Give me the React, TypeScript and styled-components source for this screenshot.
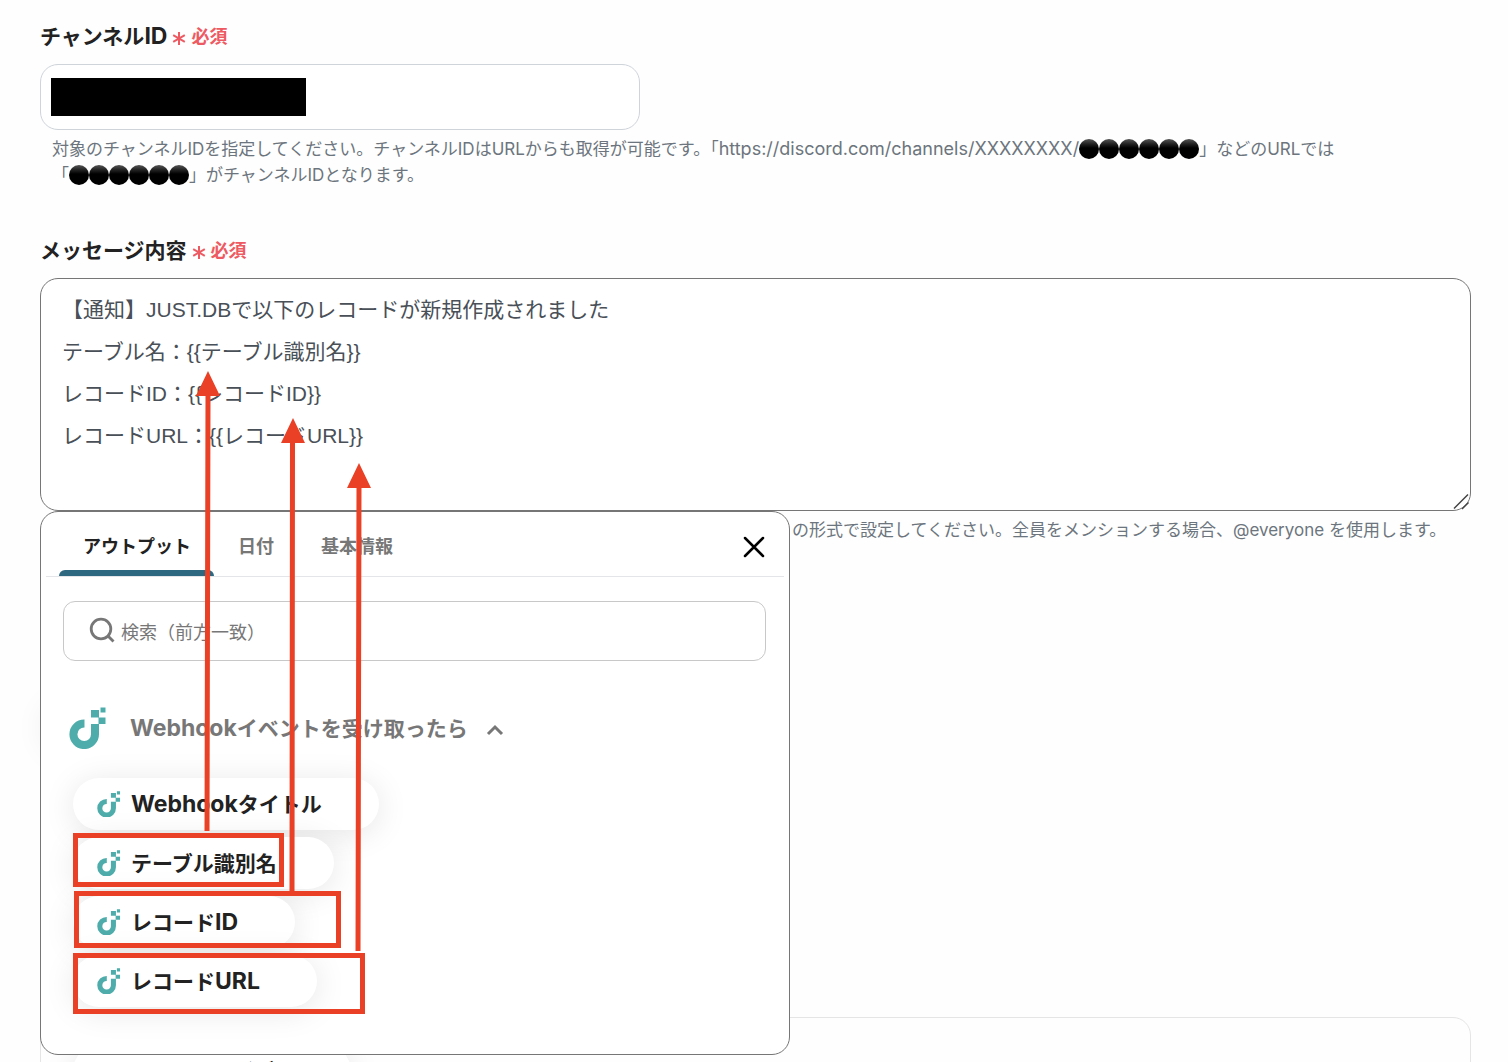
import React, { useState } from "react";
import styled, { createGlobalStyle } from "styled-components";

const GlobalStyle = createGlobalStyle`
  *, *::before, *::after { box-sizing: border-box; }
  body {
    margin: 0;
    background: #fefefe;
    color: #222;
    font-family: Inter, "Noto Sans CJK JP", sans-serif;
    overflow: hidden;
  }
  button, input, textarea { font-family: inherit; }
`;

const Page = styled.main`
  position: relative;
  height: 100vh;
  padding: 24px 37px 0 40px;
  overflow: hidden;
`;

const Field = styled.section<{ $gap?: number }>`
  position: relative;
  margin-bottom: ${(p) => p.$gap ?? 0}px;
`;

const Label = styled.label`
  display: flex;
  align-items: center;
  gap: 5px;
  height: 26px;
  margin-bottom: 14px;
  font-size: 21px;
  font-weight: 700;
  line-height: 26px;
`;

const Required = styled.span`
  display: flex;
  align-items: center;
  gap: 5px;
  color: #ee5a62;
  font-size: 18px;
`;

const InputBox = styled.div`
  position: relative;
  max-width: 600px;
`;

const TextInput = styled.input`
  display: block;
  width: 100%;
  height: 66px;
  padding: 0 22px;
  border: 1px solid #ced4da;
  border-radius: 18px;
  background: #fff;
  font-size: 21px;
`;

const Redaction = styled.span`
  position: absolute;
  left: 11px;
  top: 14px;
  width: 255px;
  height: 38px;
  background: #000;
`;

const Help = styled.p<{ $beside?: boolean }>`
  margin: 6px 0 0;
  padding-left: ${(p) => (p.$beside ? "752px" : "12px")};
  color: #6c757d;
  font-size: 17px;
  line-height: 26px;
`;

const Latin = styled.span<{ $size: number }>`
  font-size: ${(p) => p.$size}px;
  line-height: 1;
`;

const Dots = styled.span`
  display: inline-flex;
  vertical-align: -4px;
`;

const Dot = styled.span`
  width: 20px;
  height: 20px;
  border-radius: 50%;
  background: linear-gradient(#555 0, #222 25%, #000 45%);
`;

const MessageBox = styled.div`
  position: relative;
`;

const Message = styled.textarea`
  display: block;
  width: 100%;
  height: 233px;
  padding: 10px 21px;
  border: 1px solid #767676;
  border-radius: 18px;
  background: #fff;
  color: #495057;
  font-family: "Liberation Sans", "Noto Sans CJK JP", sans-serif;
  font-size: 21px;
  line-height: 42px;
  resize: none;
`;

const Grip = styled.svg`
  position: absolute;
  right: 0;
  bottom: 0;
`;

const Panel = styled.div`
  position: absolute;
  z-index: 2;
  top: 273px;
  left: 0;
  width: 750px;
  height: 544px;
  padding: 0 5px;
  border: 1px solid #767676;
  border-radius: 18px;
  background: #fff;
`;

const PanelGlow = styled.div`
  position: absolute;
  z-index: 1;
  top: 460px;
  left: 4px;
  width: 300px;
  height: 52px;
  border-radius: 26px;
  box-shadow: 0 4px 32px rgba(0, 0, 0, 0.08);
`;

const Tabs = styled.div`
  display: flex;
  height: 65px;
  padding: 0 14px 0 13px;
  border-bottom: 1px solid #e3e5e8;
`;

const Tab = styled.button<{ $active?: boolean }>`
  position: relative;
  height: 64px;
  padding: 2px 23px 0 24px;
  border: 0;
  background: none;
  color: ${(p) => (p.$active ? "#222" : "#777")};
  font-size: 18px;
  font-weight: 700;

  &::after {
    content: "";
    position: absolute;
    left: 0;
    right: 0;
    bottom: 0;
    height: 6px;
    border-radius: 6px 6px 0 0;
    background: ${(p) => (p.$active ? "#2e6780" : "transparent")};
  }
`;

const Close = styled.button`
  margin-left: auto;
  padding: 8px 5px 0;
  border: 0;
  background: none;
`;

const Search = styled.label`
  display: flex;
  align-items: center;
  gap: 5px;
  height: 60px;
  margin: 24px 18px 0 17px;
  padding: 0 25px;
  border: 1px solid #c8c8c8;
  border-radius: 12px;
  color: #777;
`;

const SearchInput = styled.input`
  flex: 1;
  padding: 2px 0 0;
  border: 0;
  outline: 0;
  background: none;
  font-size: 18px;
  &::placeholder { color: #777; opacity: 1; }
`;

const Source = styled.button`
  display: flex;
  align-items: center;
  height: 48px;
  margin: 43px 0 0 23px;
  padding: 0;
  border: 0;
  background: none;
  color: #777;
  font-size: 21px;
  font-weight: 700;
`;

const SourceName = styled.span`
  margin: 0 18px 0 23px;
  padding-bottom: 2px;
`;

const Chips = styled.div`
  display: flex;
  flex-direction: column;
  align-items: flex-start;
  gap: 7px;
  margin: 26px 0 0 27px;
`;

const Chip = styled.button<{ $plain?: boolean }>`
  display: flex;
  align-items: center;
  gap: 10px;
  height: 52px;
  padding: 0 57px 0 ${(p) => (p.$plain ? 54 : 24)}px;
  border: 0;
  border-radius: 26px;
  background: #fff;
  box-shadow: 0 4px 32px rgba(0, 0, 0, 0.1);
  color: #222;
  font-size: 21px;
  font-weight: 700;
  white-space: nowrap;
`;

const ChipText = styled.span`
  padding-bottom: 2px;
`;

const Card = styled.section`
  position: absolute;
  top: 1017px;
  left: 40px;
  right: 37px;
  height: 120px;
  padding: 27px 32px;
  border: 1px solid #e5e5e5;
  border-radius: 18px;
`;

const Annotations = styled.svg`
  position: absolute;
  z-index: 3;
  left: 0;
  top: 0;
  pointer-events: none;
`;

function Asterisk() {
  return (
    <svg width="14" height="18" viewBox="0 0 14 18" stroke="currentColor" strokeWidth="2" aria-hidden>
      <path d="M7 4v13M1.200 7.200l11.600 6.600M12.800 7.200L1.200 13.800" />
    </svg>
  );
}

function Logo({ size }: { size: number }) {
  return (
    <svg width={size} height={(size * 42) / 38} viewBox="0 0 38 42" fill="#4eadab" aria-hidden>
      <path d="M15.500 12.500A14.800 14.800 0 1 0 30 27V17H22V27A6.800 6.800 0 1 1 15.500 20.500Z" />
      <path d="M22 3h8v7.500h-8zM31.500 .5h5v5h-5zM29.500 10.500h7v6.500h-7z" />
    </svg>
  );
}

function Blackout() {
  return (
    <Dots aria-hidden>
      {[0, 1, 2, 3, 4, 5].map((i) => (
        <Dot key={i} />
      ))}
    </Dots>
  );
}

/* Latin words are set a little larger than the kana beside them. */
function Mixed({ text }: { text: string }) {
  return (
    <>
      {text.split(/([A-Za-z]+)/).map((part, i) =>
        i % 2 ? <Latin key={i} $size={23}>{part}</Latin> : part
      )}
    </>
  );
}

const outputs = ["Webhookタイトル", "テーブル識別名", "レコードID", "レコードURL"];
const tabs = ["アウトプット", "日付", "基本情報"];

export default function App() {
  const [tab, setTab] = useState(tabs[0]);
  const [message, setMessage] = useState(
    "【通知】JUST.DBで以下のレコードが新規作成されました\nテーブル名：{{テーブル識別名}}\nレコードID：{{レコードID}}\nレコードURL：{{レコードURL}}"
  );
  return (
    <>
      <GlobalStyle />
      <Page>
        <Field $gap={50}>
          <Label htmlFor="channel">
            <span><Mixed text="チャンネルID" /></span>
            <Required><Asterisk />必須</Required>
          </Label>
          <InputBox>
            <TextInput id="channel" />
            <Redaction />
          </InputBox>
          <Help>
            対象のチャンネルIDを指定してください。チャンネルIDはURLからも取得が可能です。「<Latin $size={18}>https://discord.com/channels/XXXXXXXX/</Latin><Blackout />」などのURLでは<br />
            「<Blackout />」がチャンネルIDとなります。
          </Help>
        </Field>
        <Field>
          <Label htmlFor="message">
            メッセージ内容
            <Required><Asterisk />必須</Required>
          </Label>
          <MessageBox>
            <Message id="message" value={message} onChange={(e) => setMessage(e.target.value)} />
            <Grip width="20" height="20" viewBox="0 0 20 20" stroke="#444" strokeWidth="1.500" aria-hidden>
              <path d="M3 17.500L17 3.500M11 18L17.500 11.500" />
            </Grip>
          </MessageBox>
          <Help $beside>の形式で設定してください。全員をメンションする場合、@everyone を使用します。</Help>
          <PanelGlow />
          <Panel>
            <Tabs role="tablist">
              {tabs.map((t) => (
                <Tab key={t} role="tab" aria-selected={t === tab} $active={t === tab} onClick={() => setTab(t)}>
                  {t}
                </Tab>
              ))}
              <Close aria-label="閉じる">
                <svg width="22" height="22" viewBox="0 0 22 22" stroke="#000" strokeWidth="2.500" strokeLinecap="round" aria-hidden>
                  <path d="M2 2l18 18M20 2L2 20" />
                </svg>
              </Close>
            </Tabs>
            <Search>
              <svg width="27" height="28" viewBox="0 0 27 28" fill="none" stroke="currentColor" strokeWidth="2.800" aria-hidden>
                <circle cx="12" cy="12" r="9.800" />
                <path d="M18.500 18.500l6 6" />
              </svg>
              <SearchInput placeholder="検索（前方一致）" aria-label="検索（前方一致）" />
            </Search>
            <Source>
              <Logo size={38} />
              <SourceName><Mixed text="Webhookイベントを受け取ったら" /></SourceName>
              <svg width="18" height="16" viewBox="0 0 18 16" fill="none" stroke="currentColor" strokeWidth="3" aria-hidden>
                <path d="M2 14l7-7 7 7" />
              </svg>
            </Source>
            <Chips>
              {outputs.map((o) => (
                <Chip key={o}><Logo size={24} /><ChipText><Mixed text={o} /></ChipText></Chip>
              ))}
            </Chips>
          </Panel>
        </Field>
        <Card>
          <Chip $plain><ChipText>レコードのボディ</ChipText></Chip>
        </Card>
        <Annotations width="400" height="1062" viewBox="0 0 400 1062" fill="none" stroke="#ea4025" strokeWidth="5" aria-hidden>
          <path d="M207 831L208 394M292 892L292.500 440M358 951L359 486" />
          <path d="M75.500 835.500h206v49h-206zM76.500 893.500h262v52h-262zM75.500 955.500h287v56h-287z" />
          <path d="M208 371l12 25h-24zM293 418l12 25h-24zM359 463l12 25h-24z" fill="#ea4025" stroke="none" />
        </Annotations>
      </Page>
    </>
  );
}
